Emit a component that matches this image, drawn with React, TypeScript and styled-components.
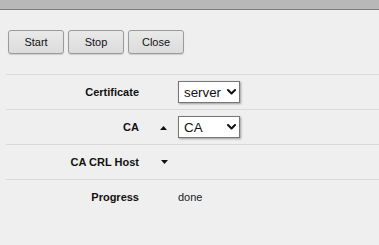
import React, { useState } from "react";
import styled, { createGlobalStyle } from "styled-components";

const GlobalStyle = createGlobalStyle`
  html, body {
    margin: 0;
    padding: 0;
    background: #efefef;
    font-family: "Liberation Sans", Arial, sans-serif;
    color: #111;
  }
`;

const Page = styled.div`
  display: flex;
  flex-direction: column;
  min-height: 245px;
  background: #efefef;
`;

const TopBar = styled.div`
  height: 9px;
  background: #b8b8b8;
  border-bottom: 1px solid #7c7c7c;
`;

const Toolbar = styled.div`
  display: flex;
  gap: 4px;
  padding: 20px 8px 20px 8px;
`;

const Button = styled.button`
  width: 56px;
  height: 24px;
  padding: 0;
  font-family: "Liberation Sans", Arial, sans-serif;
  font-size: 11px;
  color: #111;
  background: linear-gradient(#e9e9e9, #dcdcdc);
  border: 1px solid #9a9a9a;
  border-radius: 3px;
  box-shadow: 0 1px 1px rgba(0, 0, 0, 0.15);
  cursor: pointer;
`;

const Form = styled.div`
  display: flex;
  flex-direction: column;
  margin-left: 6px;
`;

const Row = styled.div`
  display: grid;
  grid-template-columns: 133px 39px 1fr;
  align-items: center;
  height: 34px;
  border-top: 1px solid #d9d9d9;
`;

const Label = styled.div`
  font-size: 11px;
  font-weight: bold;
  text-align: right;
  color: #111;
`;

const ArrowCell = styled.div<{ $down?: boolean }>`
  display: flex;
  align-items: center;
  padding-left: ${(p) => (p.$down ? "22px" : "21px")};
  padding-top: ${(p) => (p.$down ? "0" : "1px")};
`;

const Value = styled.div`
  font-size: 11px;
  color: #222;
  display: flex;
  align-items: center;
`;

const SelectWrap = styled.div`
  position: relative;
  display: inline-flex;
  box-shadow: 1px 1px 2px rgba(0, 0, 0, 0.35);
`;

const Select = styled.select`
  appearance: none;
  -webkit-appearance: none;
  width: 62px;
  height: 22px;
  font-family: "Liberation Sans", Arial, sans-serif;
  font-size: 13.333px;
  color: #111;
  background: #fff;
  border: 1px solid #767676;
  border-radius: 0;
  padding: 0 0 0 5px;
  margin: 0;
  outline: none;
`;

const Chevron = styled.svg`
  position: absolute;
  right: 4px;
  top: 8px;
  pointer-events: none;
`;

const Triangle: React.FC<{ down?: boolean }> = ({ down }) => (
  <svg width="7" height="4" viewBox="0 0 7 4">
    {down ? (
      <polygon points="0,0 7,0 3.5,4" fill="#111" />
    ) : (
      <polygon points="0,4 7,4 3.5,0" fill="#111" />
    )}
  </svg>
);

const Dropdown: React.FC<{
  value: string;
  options: string[];
  onChange: (v: string) => void;
}> = ({ value, options, onChange }) => (
  <SelectWrap>
    <Select value={value} onChange={(e) => onChange(e.target.value)}>
      {options.map((o) => (
        <option key={o} value={o}>
          {o}
        </option>
      ))}
    </Select>
    <Chevron width="9" height="6" viewBox="0 0 9 6">
      <polyline
        points="1,1 4.5,4.5 8,1"
        fill="none"
        stroke="#111"
        strokeWidth="2"
        strokeLinecap="round"
        strokeLinejoin="round"
      />
    </Chevron>
  </SelectWrap>
);

const App: React.FC = () => {
  const [cert, setCert] = useState("server");
  const [ca, setCa] = useState("CA");

  return (
    <Page>
      <GlobalStyle />
      <TopBar />
      <Toolbar>
        <Button>Start</Button>
        <Button>Stop</Button>
        <Button>Close</Button>
      </Toolbar>
      <Form>
        <Row>
          <Label>Certificate</Label>
          <ArrowCell />
          <Value>
            <Dropdown value={cert} options={["server", "client"]} onChange={setCert} />
          </Value>
        </Row>
        <Row>
          <Label>CA</Label>
          <ArrowCell>
            <Triangle />
          </ArrowCell>
          <Value>
            <Dropdown value={ca} options={["CA"]} onChange={setCa} />
          </Value>
        </Row>
        <Row>
          <Label>CA CRL Host</Label>
          <ArrowCell $down>
            <Triangle down />
          </ArrowCell>
          <Value />
        </Row>
        <Row>
          <Label>Progress</Label>
          <ArrowCell />
          <Value>done</Value>
        </Row>
      </Form>
    </Page>
  );
};

export default App;
